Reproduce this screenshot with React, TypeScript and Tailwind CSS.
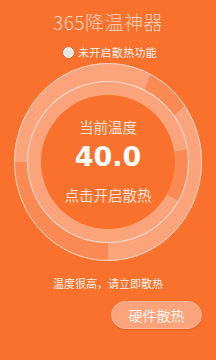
import React from "react";

const CX = 108;
const CY = 100;
const ORX = 94;
const ORY = 99;
const LINE_R = 80.5;
const DISK_R = 67;

function pt(deg: number, rx: number, ry: number): [number, number] {
  const t = (deg * Math.PI) / 180;
  return [CX + rx * Math.sin(t), CY - ry * Math.cos(t)];
}

function band(a0: number, a1: number, orx: number, ory: number, ir: number): string {
  const pts: string[] = [];
  for (let a = a0; a <= a1; a += 1) {
    const [x, y] = pt(a, orx, ory);
    pts.push(`${x.toFixed(2)},${y.toFixed(2)}`);
  }
  for (let a = a1; a >= a0; a -= 1) {
    const [x, y] = pt(a, ir, ir);
    pts.push(`${x.toFixed(2)},${y.toFixed(2)}`);
  }
  return "M" + pts.join(" L") + " Z";
}

function Gauge() {
  return (
    <svg className="absolute inset-0" width="216" height="202" viewBox="0 0 216 202">
      <ellipse cx={CX} cy={CY} rx={ORX} ry={ORY} fill="#FBA47C" />
      <path d={band(27, 55, ORX, ORY, LINE_R)} fill="#FA8953" />
      <path d={band(180, 270, ORX, ORY, LINE_R)} fill="#FA8953" />
      <path d={band(81, 119, LINE_R, LINE_R, DISK_R)} fill="#FA8953" />
      <ellipse cx={CX} cy={CY} rx={ORX - 0.5} ry={ORY - 0.5} fill="none" stroke="#FDD3BF" strokeWidth="1" />
      <circle cx={CX} cy={CY} r={LINE_R} fill="none" stroke="#FDD6C3" strokeWidth="1.2" />
      <circle cx={CX} cy={CY} r={DISK_R} fill="#FA712D" />
    </svg>
  );
}

export default function App() {
  const cjk = { fontFamily: '"Noto Sans CJK SC", "Noto Sans", sans-serif' };
  return (
    <div
      className="w-[216px] h-[360px] bg-[#FA712D] flex flex-col items-center overflow-hidden"
      style={cjk}
    >
      <div className="pt-[10px] text-[19px] leading-[24px] font-light tracking-[0.5px] text-[#FDD6C2]">
        365降温神器
      </div>
      <div className="mt-[11px] flex items-center gap-[4px] ml-[4px] h-[14px]">
        <div className="w-[11px] h-[11px] rounded-full bg-[#E4E4E4] border-[1.5px] border-white shadow-[0_0_1px_rgba(0,0,0,0.3)]" />
        <span className="text-[11px] leading-[14px] tracking-[0.3px] text-[#FFF3EC]">未开启散热功能</span>
      </div>
      <div className="relative mt-[3px] w-[216px] h-[202px] shrink-0">
        <Gauge />
        <div className="relative flex flex-col items-center pt-[55px]">
          <div className="text-[14.5px] leading-[20px] text-[#FDE3D4]">当前温度</div>
          <div
            className="mt-[7px] text-[27px] leading-[26px] font-bold text-white"
            style={{ fontFamily: '"DejaVu Sans", sans-serif' }}
          >
            40.0
          </div>
          <div className="mt-[15px] text-[14.5px] leading-[20px] text-[#FDE3D4]">点击开启散热</div>
        </div>
      </div>
      <div className="mt-[11px] text-[11px] leading-[16px] text-[#FFF1E8]">温度很高，请立即散热</div>
      <div className="self-end mr-[14px] mt-[10px] w-[91px] h-[28px] rounded-full bg-[#FBA47C] border border-[#FCB593] shadow-[0_1px_1px_rgba(150,60,20,0.25)] flex items-center justify-center text-[14px] text-[#FFF1E9]">
        硬件散热
      </div>
    </div>
  );
}
